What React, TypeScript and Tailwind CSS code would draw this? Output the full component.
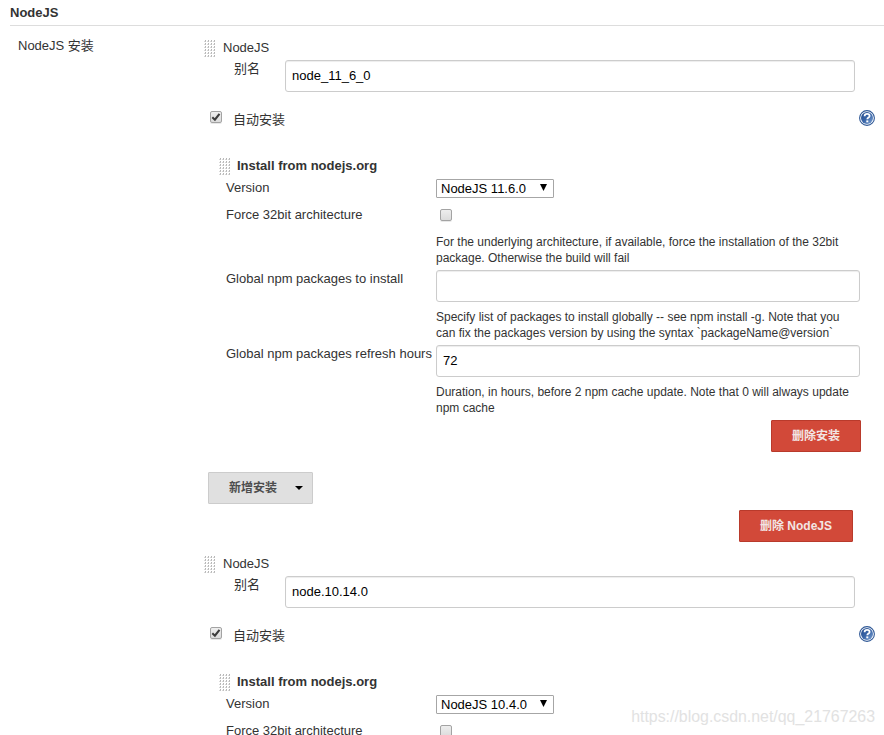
import type { ReactNode } from "react";

function DragHandle() {
  const cells: ReactNode[] = [];
  for (let row = 0; row < 6; row++) {
    for (let col = 0; col < 4; col++) {
      cells.push(
        <g key={`${row}-${col}`}>
          <rect x={col * 3 + 1} y={row * 3} width="1" height="1" fill="#b5b5b5" />
          <rect x={col * 3} y={row * 3 + 1} width="1" height="1" fill="#dadada" />
          <rect x={col * 3 + 1} y={row * 3 + 1} width="1" height="1" fill="#c0c0c0" />
        </g>
      );
    }
  }
  return (
    <svg width="12" height="18" viewBox="0 0 12 18" shapeRendering="crispEdges" className="shrink-0">
      {cells}
    </svg>
  );
}

function Checkbox({ checked = false }: { checked?: boolean }) {
  return (
    <span
      role="checkbox"
      aria-checked={checked}
      className="block size-3 shrink-0 rounded-[2px] border border-[#a3a3a3] bg-linear-to-b from-[#eeeeee] to-[#dcdcdc] shadow-[0_1px_0_#e8e8e8]"
    >
      {checked && (
        <svg viewBox="0 0 10 10" className="block size-2.5">
          <path d="M1.3 5.3 3.9 7.7 8.5 1.8" fill="none" stroke="#3c3c3c" strokeWidth="2.1" />
        </svg>
      )}
    </span>
  );
}

function HelpIcon() {
  return (
    <svg width="16" height="16" viewBox="0 0 16 16" className="shrink-0">
      <defs>
        <linearGradient id="help-fill" x1="0" y1="0" x2="1" y2="1">
          <stop offset="0" stopColor="#234a8a" />
          <stop offset="0.5" stopColor="#3a66a8" />
          <stop offset="1" stopColor="#7fa3d4" />
        </linearGradient>
      </defs>
      <circle cx="8" cy="8" r="7.4" fill="#fff" stroke="#2f5896" strokeWidth="1.1" />
      <circle cx="8" cy="8" r="6" fill="url(#help-fill)" />
      <path
        d="M5.6 6.2C5.6 4.6 6.7 3.9 8.1 3.9s2.5.8 2.5 2c0 1.7-2.3 1.6-2.3 3.4"
        fill="none"
        stroke="#fff"
        strokeWidth="1.8"
      />
      <rect x="7.3" y="10.4" width="2" height="1.9" fill="#fff" />
    </svg>
  );
}

function TextInput({ value, className }: { value: string; className: string }) {
  return (
    <input
      readOnly
      value={value}
      className={`h-8 shrink-0 rounded-[3px] border border-[#cccccc] bg-white px-1.5 pb-0.5 text-[13px] text-black shadow-[inset_0_1px_1px_rgba(0,0,0,0.075)] outline-none ${className}`}
    />
  );
}

function Select({ value }: { value: string }) {
  return (
    <div className="flex h-[19px] w-[118px] items-center justify-between rounded-[1px] border border-[#a6a6a6] bg-white pr-1.5 pl-1 text-[13px] leading-[17px] text-black">
      <span className="whitespace-nowrap">{value}</span>
      <svg width="7" height="7" viewBox="0 0 7 7" className="mb-0.5">
        <path d="M0 0H7L3.5 7Z" />
      </svg>
    </div>
  );
}

function Hint({ children }: { children: ReactNode }) {
  return (
    <p className="ml-[236px] h-8 text-xs leading-4 whitespace-nowrap">{children}</p>
  );
}

function DangerButton({ children, className }: { children: ReactNode; className: string }) {
  return (
    <button
      className={`block h-8 rounded-[1px] border border-[#b93a2b] bg-[#d24939] text-xs leading-[30px] font-bold text-[#f2e6e4] ${className}`}
    >
      {children}
    </button>
  );
}

function InstallerDetails() {
  return (
    <>
      <Hint>
        For the underlying architecture, if available, force the installation of the 32bit
        <br />
        package. Otherwise the build will fail
      </Hint>
      <div className="mt-1 mb-[7px] flex h-8">
        <span className="ml-[26px] w-[210px] shrink-0 leading-[18px]">Global npm packages to install</span>
        <TextInput value="" className="w-[424px]" />
      </div>
      <Hint>
        Specify list of packages to install globally -- see npm install -g. Note that you
        <br />
        can fix the packages version by using the syntax `packageName@version`
      </Hint>
      <div className="mt-1 mb-[7px] flex h-8">
        <span className="ml-[26px] w-[210px] shrink-0 leading-[18px] whitespace-nowrap">
          Global npm packages refresh hours
        </span>
        <TextInput value="72" className="w-[424px]" />
      </div>
      <Hint>
        Duration, in hours, before 2 npm cache update. Note that 0 will always update
        <br />
        npm cache
      </Hint>
      <DangerButton className="mt-1 mr-[23px] ml-auto w-[90px]">删除安装</DangerButton>
      <button className="mt-5 ml-2 flex h-8 w-[105px] items-center rounded-[1px] border border-[#cccccc] bg-[#e0e0e0] pl-5 text-xs font-bold text-[#4d4d4d]">
        新增安装
        <svg width="8" height="4" viewBox="0 0 8 4" className="ml-[18px]">
          <path d="M0 0H8L4 4Z" fill="#000" />
        </svg>
      </button>
      <DangerButton className="mt-1.5 mr-[31px] ml-auto w-[114px]">删除 NodeJS</DangerButton>
    </>
  );
}

function Installation({ name, version, children }: { name: string; version: string; children?: ReactNode }) {
  return (
    <section className="mb-3 shrink-0">
      <div className="flex h-[22px] items-start gap-[7px] pl-1">
        <div className="pt-0.5">
          <DragHandle />
        </div>
        <span className="pt-px leading-[18px]">NodeJS</span>
      </div>
      <div className="flex h-8">
        <span className="w-[85px] shrink-0 pl-[34px] leading-[18px]">别名</span>
        <TextInput value={name} className="w-[570px]" />
      </div>
      <div className="mt-[18px] flex h-[18px] items-start">
        <div className="pt-px pl-2.5">
          <Checkbox checked />
        </div>
        <span className="ml-[11px] pt-px leading-[18px]">自动安装</span>
        <div className="mr-[9px] ml-auto">
          <HelpIcon />
        </div>
      </div>

      <div className="mt-7 flex h-[23px] items-start gap-1.5 pl-[19px]">
        <div className="pt-0.5">
          <DragHandle />
        </div>
        <span className="pt-px leading-[18px] font-bold">Install from nodejs.org</span>
      </div>
      <div className="flex h-[27px]">
        <span className="ml-[26px] w-[210px] shrink-0 leading-[18px]">Version</span>
        <Select value={version} />
      </div>
      <div className="flex h-7">
        <span className="ml-[26px] w-[214px] shrink-0 leading-[18px]">Force 32bit architecture</span>
        <div className="pt-[3px]">
          <Checkbox />
        </div>
      </div>
      {children}
    </section>
  );
}

export default function App() {
  return (
    <main className="relative flex h-[735px] w-[884px] flex-col overflow-hidden bg-white font-['Liberation_Sans','Noto_Sans_CJK_SC',sans-serif] text-[13px] text-[#333333]">
      <h1 className="ml-2.5 h-[26px] shrink-0 border-b border-[#dddddd] pt-px leading-6 font-bold">NodeJS</h1>
      <div className="flex pt-3">
        <div className="w-[200px] shrink-0 pl-[18px] leading-4">NodeJS 安装</div>
        <div className="flex w-[684px] flex-col">
          <Installation name="node_11_6_0" version="NodeJS 11.6.0">
            <InstallerDetails />
          </Installation>
          <Installation name="node.10.14.0" version="NodeJS 10.4.0" />
        </div>
      </div>
      <div className="absolute right-[9px] bottom-2 text-[15.9px] leading-5 text-[#e2e2e2]">
        https://blog.csdn.net/qq_21767263
      </div>
    </main>
  );
}
